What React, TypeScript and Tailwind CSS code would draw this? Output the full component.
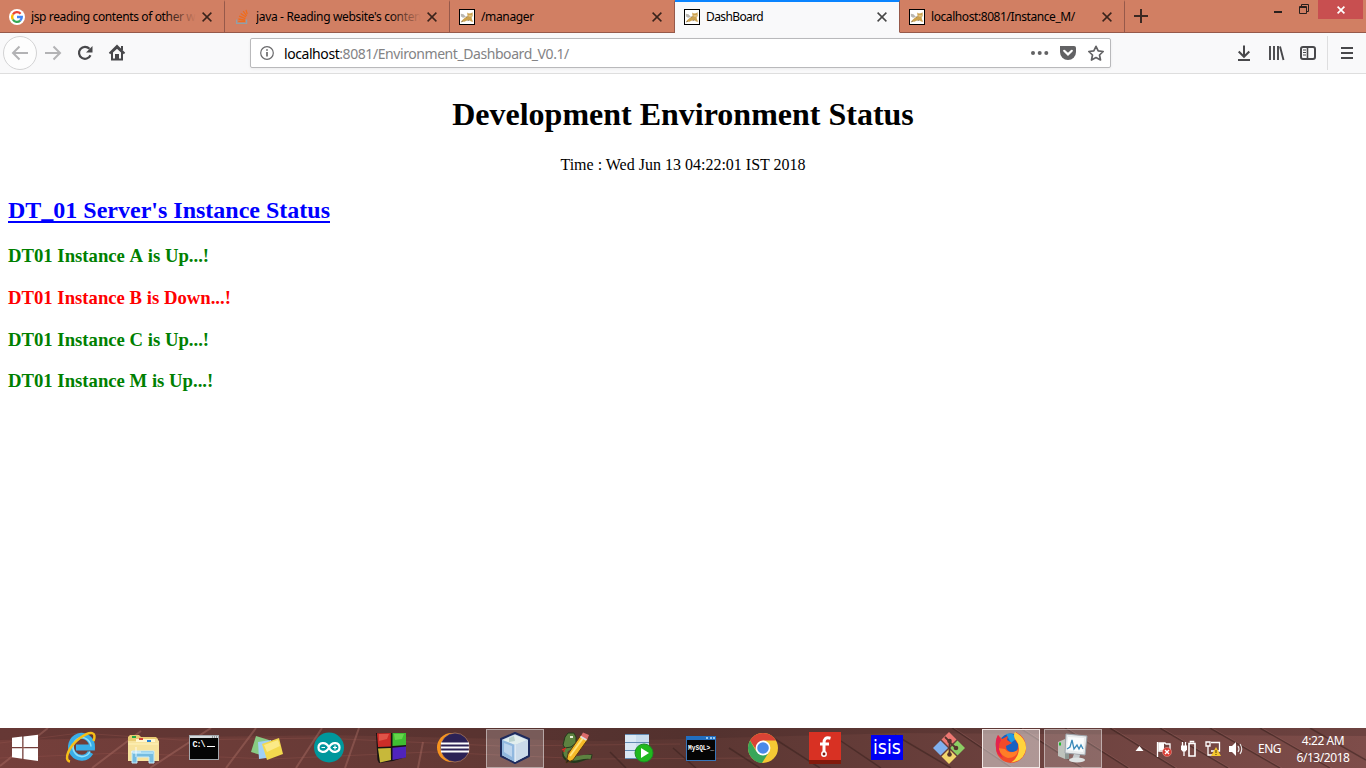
import type { ReactNode } from 'react';

const ui = "font-['Noto_Sans','Open_Sans',sans-serif]";

function GoogleIcon() {
  return (
    <svg viewBox="0 0 16 16" className="h-4 w-4 shrink-0">
      <circle cx="8" cy="8" r="8" fill="#fff" />
      <g fill="none" strokeWidth="2.3">
        <path d="M3.9 5.5A4.8 4.8 0 0 1 11.6 4.8" stroke="#ea4335" />
        <path d="M3.9 5.5A4.8 4.8 0 0 0 3.9 10.5" stroke="#fbbc05" />
        <path d="M3.9 10.5A4.8 4.8 0 0 0 11.2 11.6" stroke="#34a853" />
        <path d="M11.2 11.6A4.8 4.8 0 0 0 12.8 8H8" stroke="#4285f4" />
      </g>
    </svg>
  );
}

function StackIcon() {
  return (
    <svg viewBox="0 0 16 16" className="h-4 w-4 shrink-0" fill="none" strokeWidth="1.3">
      <path d="M2.6 10.5V14.4H12.6V10.5" stroke="#8fa0a8" />
      <path d="M4.3 12.4H11M4.4 10 11 11.1M5.1 7.2 11.4 9.6M6.7 4.5 12 8M9.2 2.2 12.6 6.8M12 .8 13.2 5.2" stroke="#ef6c1c" />
    </svg>
  );
}

function TomcatIcon() {
  return (
    <svg viewBox="0 0 16 16" className="h-4 w-4 shrink-0">
      <rect x=".5" y=".5" width="15" height="15" fill="#fff" stroke="#000" />
      <path d="M1.8 4.8 4.5 5.2 7 8 4 8.8 2 7.5Z" fill="#b9b7b2" />
      <path d="M2 12.6 4.2 10.2 6.2 8.4 8.6 7.4 8.2 3.4 9.8 4.4 12 4.3 13.6 3.2 13.7 7 12.6 8.6 13 10.6 14.3 12.8 12 12.6 10.4 11 8 11.4 5.4 12.8Z" fill="#cda250" />
      <path d="M9.4 6H12.8V7.8H9.8Z" fill="#e2c486" />
      <path d="M2 13 4 12.2M8.6 11.6 10.6 11.2M7 8.2 8.6 7.6" fill="none" stroke="#7d6844" strokeWidth=".7" />
    </svg>
  );
}

function TabClose() {
  return (
    <svg viewBox="0 0 10 10" className="h-[10px] w-[10px] shrink-0">
      <path d="M.6.6 9.4 9.4M9.4.6.6 9.4" stroke="#000" strokeOpacity=".72" strokeWidth="1.5" />
    </svg>
  );
}

type TabData = { label: string; icon: ReactNode; active?: boolean; fade?: boolean; spacing: string };

const tabs: TabData[] = [
  { label: 'jsp reading contents of other w', icon: <GoogleIcon />, fade: true, spacing: 'tracking-[-0.37px]' },
  { label: "java - Reading website's conten", icon: <StackIcon />, fade: true, spacing: 'tracking-[-0.34px]' },
  { label: '/manager', icon: <TomcatIcon />, spacing: 'tracking-[-0.35px]' },
  { label: 'DashBoard', icon: <TomcatIcon />, active: true, spacing: 'tracking-[-0.6px]' },
  { label: 'localhost:8081/Instance_M/', icon: <TomcatIcon />, spacing: 'tracking-[-0.42px]' },
];

function Tab({ tab }: { tab: TabData }) {
  return (
    <div
      className={
        tab.active
          ? 'flex h-[33px] w-[225px] items-center border-t-2 border-r border-b border-t-[#0a84ff] border-r-[#96594a] border-b-[#f9f9fa] bg-[#f9f9fa] pr-[11px] pl-[9px]'
          : 'flex h-[33px] w-[225px] items-center border-t-2 border-r border-b border-t-transparent border-r-[#96594a] border-b-[#96594a] pr-[11px] pl-[9px]'
      }
    >
      {tab.icon}
      <div className="relative ml-1.5 w-[165px] overflow-hidden">
        <span className={`block text-[12px] leading-5 whitespace-nowrap text-black ${tab.spacing}`}>{tab.label}</span>
        {tab.fade && <span className="absolute inset-y-0 right-0 w-8 bg-linear-to-r from-[#d17f63]/0 to-[#d17f63]" />}
      </div>
      <span className="ml-auto pr-px">
        <TabClose />
      </span>
    </div>
  );
}

function TabStrip() {
  return (
    <header className="flex h-[33px] shrink-0 bg-[#d17f63]">
      {tabs.map((t) => (
        <Tab key={t.label} tab={t} />
      ))}
      <div className="flex flex-1 items-start border-b border-[#96594a]">
        <svg viewBox="0 0 14 14" className="mt-[9px] ml-[9px] h-[14px] w-[14px]">
          <path d="M7 0V14M0 7H14" stroke="#3a2923" strokeWidth="2" />
        </svg>
        <svg viewBox="0 0 48 20" className="ml-auto h-5 w-12" fill="none" stroke="#29201d">
          <path d="M9 12H17" strokeWidth="2" />
          <path d="M34.5 6.5H41.5V13.5H34.5ZM34.5 7.5H41.5M36.5 6V4.5H43.5V11.5H42" strokeWidth="1" />
        </svg>
        <div className="ml-[5px] mr-[3px] flex h-[19px] w-[45px] items-center justify-center bg-[#c84f50]">
          <svg viewBox="0 0 8 8" className="h-2 w-2">
            <path d="M.6.6 7.4 7.4M7.4.6.6 7.4" stroke="#fff" strokeWidth="1.7" />
          </svg>
        </div>
      </div>
    </header>
  );
}

function Toolbar() {
  return (
    <nav className="flex h-[41px] shrink-0 items-center border-b border-[#dedede] bg-[#f9f9fa]">
      <svg viewBox="0 0 130 40" className="h-10 w-[130px]" fill="none">
        <circle cx="20" cy="20" r="16.5" fill="#fdfdfd" stroke="#d3d3d4" />
        <path d="M28 20H13M19.5 13.5 13 20 19.5 26.5" stroke="#b3b3b5" strokeWidth="2" />
        <path d="M45 20H60M53.5 13.5 60 20 53.5 26.5" stroke="#b3b3b5" strokeWidth="2" />
        <path d="M90.5 22.3A6 6 0 1 1 89.5 15.8" stroke="#48484b" strokeWidth="2.2" />
        <path d="M92.5 13V19.5H86Z" fill="#48484b" />
        <path d="M109.5 20.5 117 13 124.5 20.5" stroke="#48484b" strokeWidth="2" />
        <path d="M112 19V26.5H122V19L117 14.5Z" stroke="#48484b" strokeWidth="2" />
        <path d="M115 21H119V27H115Z" fill="#48484b" />
        <path d="M121 13H123V17H121Z" fill="#48484b" />
      </svg>
      <div className="ml-[120px] flex h-[30px] w-[861px] items-center rounded-[2px] border border-[#b9b9bb] bg-white shadow-[0_1px_3px_rgba(0,0,0,0.06)]">
        <svg viewBox="0 0 14 14" className="ml-[9px] h-[14px] w-[14px]" fill="none" stroke="#6a6a6c">
          <circle cx="7" cy="7" r="6.3" strokeWidth="1.2" />
          <path d="M7 6V10.5M7 3.2V4.8" strokeWidth="1.7" />
        </svg>
        <span className="ml-[10px] pt-[2px] text-[14px] leading-5 tracking-[-0.43px] whitespace-nowrap text-[#838385]">
          <span className="text-black">localhost</span>:8081/Environment_Dashboard_V0.1/
        </span>
        <svg viewBox="0 0 80 20" className="mr-[2px] ml-auto h-5 w-20" fill="none">
          <g fill="#626264">
            <circle cx="5" cy="10" r="2" />
            <circle cx="11.7" cy="10" r="2" />
            <circle cx="18.3" cy="10" r="2" />
            <path d="M33 3H47Q49 3 49 5V9A8 8 0 0 1 33 9V5Q33 3 33 3Z" transform="translate(-1 0)" />
          </g>
          <path d="M36.2 7.8 40 11.4 43.8 7.8" stroke="#fff" strokeWidth="2.2" strokeLinecap="round" />
          <path d="M68 3.3 70.2 7.9 75.2 8.5 71.5 12 72.5 17 68 14.5 63.5 17 64.5 12 60.8 8.5 65.8 7.9Z" stroke="#626264" strokeWidth="1.7" strokeLinejoin="round" />
        </svg>
      </div>
      <svg viewBox="0 0 136 40" className="ml-auto h-10 w-[136px]" fill="none" stroke="#48484b">
        <path d="M14 12.5V24M8.7 18.5 14 23.8 19.3 18.5M8 27H20" strokeWidth="2" />
        <path d="M40 13V27M44 13V27M48 13V27M50 13.5 53.5 27" strokeWidth="1.9" />
        <rect x="71" y="14" width="14" height="12" rx="2" strokeWidth="2" />
        <path d="M77.5 14V26" strokeWidth="1.6" />
        <path d="M73 17H76M73 19.5H76M73 22H76" strokeWidth="1" />
        <path d="M97.5 3V37" stroke="#dededf" />
        <path d="M111 15H123M111 20H123M111 25H123" strokeWidth="2" />
      </svg>
    </nav>
  );
}

const instances = [
  { text: 'DT01 Instance A is Up...!', up: true },
  { text: 'DT01 Instance B is Down...!', up: false },
  { text: 'DT01 Instance C is Up...!', up: true },
  { text: 'DT01 Instance M is Up...!', up: true },
];

function Page() {
  return (
    <main className="flex-1 bg-white px-2 pt-[22px] font-['Liberation_Serif','Times_New_Roman',serif] text-black">
      <h1 className="text-center text-[32px] leading-9 font-bold">Development Environment Status</h1>
      <p className="mt-6 text-center text-[16px] leading-[18px]">Time : Wed Jun 13 04:22:01 IST 2018</p>
      <h2 className="mt-[23px] text-[24px] leading-[27px] font-bold text-[#0000ff]">
        <span className="underline decoration-2 underline-offset-[3px] [text-decoration-skip-ink:none]">DT_01 Server's Instance Status</span>
      </h2>
      <div className="mt-[21.2px] flex flex-col gap-[19.7px]">
        {instances.map((i) => (
          <h3 key={i.text} className={`text-[18.72px] leading-[22px] font-bold [font-kerning:none] ${i.up ? 'text-[#008000]' : 'text-[#ff0000]'}`}>
            {i.text}
          </h3>
        ))}
      </div>
    </main>
  );
}

const appIcons: { name: string; frame?: 'open' | 'active'; art: ReactNode }[] = [
  {
    name: 'ie',
    art: (
      <>
        <path d="M25.5 20.5A10.5 11 0 1 1 27 15.5H11" fill="none" stroke="#39aee8" strokeWidth="6" />
        <path d="M25 19.5A9 9.5 0 1 1 26 14.5" fill="none" stroke="#8fe0fc" strokeWidth="1.5" />
        <path d="M5 29.5C-2 28 4 14 15 6S32 0 28.5 9" fill="none" stroke="#f6bf18" strokeWidth="2.5" />
      </>
    ),
  },
  {
    name: 'explorer',
    art: (
      <>
        <path d="M1 5 3 3H12L14 5H29L31 7V28H1Z" fill="#e9cb72" />
        <path d="M1 9H13L15 7H30L32 9V29H1Z" fill="#f7e39d" />
        <path d="M9 7H28V10H9Z" fill="#fff7cf" />
        <path d="M5 4H9V6H5Z" fill="#25a844" />
        <path d="M12 6H16V8H12Z" fill="#d54337" />
        <path d="M20 8H24V10H20Z" fill="#2a84d5" />
        <path d="M1 12H31" stroke="#fff4bd" />
        <path d="M5 31V19H27V31H22V25H10V31Z" fill="#75bce0" stroke="#c8ecfb" />
        <path d="M6 21H26" stroke="#a9def5" strokeWidth="2" />
        <path d="M9 15V25M4 20H14" stroke="#fff" strokeWidth=".8" />
      </>
    ),
  },
  {
    name: 'cmd',
    art: (
      <>
        <rect x=".5" y="3.5" width="29" height="24" fill="#050505" stroke="#a4a9ae" />
        <path d="M1 5H29" stroke="#d6dbde" strokeWidth="2" />
        <path d="M23 5H24M25 5H26M27 5H28" stroke="#555" />
        <text x="3.5" y="15" fill="#fff" fontSize="8.5" fontFamily="Liberation Mono" fontWeight="bold" textLength="13">C:\</text>
        <path d="M18 14.5H26" stroke="#fff" />
      </>
    ),
  },
  {
    name: 'notes',
    art: (
      <>
        <path d="M5 4 18 8 13 24 0 20Z" fill="#88ca83" />
        <path d="M7 10 20 8 22 25 8 27Z" fill="#a0d0f6" />
        <path d="M11 12 28 6 32 22 16 28Z" fill="#f3d94e" />
        <path d="M13 13 27 8 29 14 16 20Z" fill="#fbea87" />
      </>
    ),
  },
  {
    name: 'arduino',
    art: (
      <>
        <circle cx="16" cy="15.5" r="15" fill="#00979c" />
        <path d="M16 15.5C12.5 8.5 5.5 11 5.5 15.5S12.5 22.5 16 15.5 26.5 11 26.5 15.5 19.5 22.5 16 15.5Z" fill="none" stroke="#fff" strokeWidth="2.2" />
        <path d="M8.5 15.5H12M20 15.5H24M22 13.5V17.5" stroke="#fff" strokeWidth="1.2" />
      </>
    ),
  },
  {
    name: 'blocks',
    art: (
      <>
        <path d="M1 1H31V25L18 29 4 31 2.5 28Z" fill="#171313" />
        <path d="M2 1.2 15.8 1V14.4L3 15Z" fill="#cc2d28" />
        <path d="M17.5 1H31V13L17.5 14Z" fill="#3fbe32" />
        <path d="M3 16.5 15.8 16 16 28 5 30.5Z" fill="#c7b83a" />
        <path d="M17.5 15.8 31 14.4V25.4L17.5 28Z" fill="#5024bc" />
        <path d="M4 2 14 2 12 7 4 9Z" fill="#f07562" opacity=".55" />
        <path d="M19 2H29L27 7 20 8Z" fill="#8deb63" opacity=".5" />
      </>
    ),
  },
  {
    name: 'eclipse',
    art: (
      <>
        <circle cx="14.5" cy="15.5" r="14.5" fill="#f7941e" />
        <circle cx="18" cy="15.5" r="14.5" fill="#2c2255" stroke="#e2a067" strokeWidth=".5" />
        <path d="M4 11.5H32M4 15.5H32M4 19.5H32" stroke="#fff" strokeWidth="2" />
      </>
    ),
  },
  {
    name: 'netbeans',
    frame: 'open',
    art: (
      <>
        <path d="M16 1 30 7V24L16 31 2 24V7Z" fill="#c1d6e9" stroke="#1e2b5d" strokeWidth="2" strokeLinejoin="round" />
        <path d="M4 8 16 3 28 8 16 13Z" fill="#e2eeee" />
        <path d="M10 6 15 4 16 9 10 10Z" fill="#abc6c1" opacity=".7" />
        <path d="M3 8 16 13V30L3 23Z" fill="#91b8df" />
        <path d="M5 11 13 14V25L5 20Z" fill="#d0e1f3" opacity=".7" />
        <path d="M16 13 29 8V23L16 30Z" fill="#cbdbea" />
        <path d="M16 13V30" stroke="#f4f8fb" />
      </>
    ),
  },
  {
    name: 'python',
    art: (
      <>
        <path d="M6 15Q1 24 7 27T20 27 31 25" fill="none" stroke="#24391c" strokeWidth="5" />
        <path d="M12 9Q15 14 9 16T5 23Q8 28 17 26T30 25" fill="none" stroke="#5d8240" strokeWidth="4" />
        <path d="M2 13 4 5 7 1H13L15 5 15 11 10 15 4 16Z" fill="#5d8240" stroke="#24391c" />
        <path d="M5 16 1 18M3 17V20" stroke="#e12924" strokeWidth="1.3" />
        <path d="M9 4H12V6H9Z" fill="#e9f0d8" />
        <path d="M5 31 7 22 20 3 27 7 12 28Z" fill="#f6ba28" stroke="#5a3a12" />
        <path d="M9 24 22 6" stroke="#ffe37b" strokeWidth="2" />
        <path d="M20 4 22 .5 28 3 26 8Z" fill="#d96b6a" />
        <path d="M19.5 4.5 25.5 8" stroke="#dedede" strokeWidth="2" />
        <path d="M5 31 6 27 9 29Z" fill="#29231b" />
      </>
    ),
  },
  {
    name: 'database',
    art: (
      <>
        <path d="M2 2H26V27H2Z" fill="#c9dced" />
        <path d="M2 3H13V26H2Z" fill="#e7f0f8" opacity=".6" />
        <path d="M2 2.5H26M2 10.5H26M2 18.5H26M2 26.5H26" stroke="#638bb3" />
        <circle cx="21" cy="21" r="9" fill="#20b91e" stroke="#1b8f23" />
        <path d="M18 16V26L26 21Z" fill="#fff" />
      </>
    ),
  },
  {
    name: 'mysql',
    art: (
      <>
        <rect x="1.5" y="4.5" width="29" height="24" fill="#050505" stroke="#3776b9" />
        <path d="M1 6H31" stroke="#226ec0" strokeWidth="4" />
        <path d="M21 6H23M25 6H27M28 6H30" stroke="#97c9ef" strokeWidth="2" />
        <text x="3" y="17.5" fill="#fff" fontSize="8" fontFamily="Liberation Mono" fontWeight="bold" textLength="26" lengthAdjust="spacingAndGlyphs">MySQL&gt;_</text>
      </>
    ),
  },
  {
    name: 'chrome',
    art: (
      <>
        <circle cx="16" cy="16" r="15" fill="#f5c934" />
        <path d="M3 8.5A15 15 0 0 1 29 8.5H16L10 19Z" fill="#d94335" />
        <path d="M3 8.5A15 15 0 0 0 15 31L22 20 16 23 9 19Z" fill="#38a65a" />
        <circle cx="16" cy="16" r="7.4" fill="#fff" />
        <circle cx="16" cy="16" r="5.8" fill="#4a89e8" />
      </>
    ),
  },
  {
    name: 'fritzing',
    art: (
      <>
        <path d="M0 0H32V28H0Z" fill="#d83123" />
        <path d="M0 28H32V32H0Z" fill="#821a0c" />
        <path d="M21.5 6.2C16.5 4.8 15 7 15 11V20M11 12H20" fill="none" stroke="#fff" strokeWidth="3" />
        <circle cx="15" cy="22" r="2.2" fill="#821a0c" stroke="#fff" strokeWidth="1.5" />
      </>
    ),
  },
  {
    name: 'isis',
    art: (
      <>
        <path d="M0 3H32V28H0Z" fill="#0000f5" />
        <text x="2" y="22" fill="#fff" fontSize="20" fontFamily="DejaVu Sans" textLength="28" lengthAdjust="spacingAndGlyphs">isis</text>
      </>
    ),
  },
  {
    name: 'git',
    art: (
      <>
        <path d="M16 0 23.5 7.5 16 15 8.5 7.5Z" fill="#ed7772" />
        <path d="M7.5 8.5 15 16 7.5 23.5 0 16Z" fill="#80b0ee" />
        <path d="M24.5 8.5 32 16 24.5 23.5 17 16Z" fill="#8cce64" />
        <path d="M16 17 23.5 24.5 16 32 8.5 24.5Z" fill="#f1d76c" />
        <path d="M12 5 16.5 9.5V23M16.5 10 22.5 15.5" fill="none" stroke="#54342d" strokeWidth="1.8" />
        <circle cx="16.5" cy="9" r="2.3" fill="#54342d" />
        <circle cx="23" cy="16" r="2.3" fill="#54342d" />
        <circle cx="16.5" cy="22.5" r="2.3" fill="#54342d" />
      </>
    ),
  },
  {
    name: 'firefox',
    frame: 'active',
    art: (
      <>
        <circle cx="16" cy="14" r="12.5" fill="#1760c3" />
        <path d="M11 2Q18 0 22 6L16 11Z" fill="#219be1" />
        <path d="M3 3 7 7 13 4 12 8 17 11 11 14Q11 20 18 20 24 20 23 12 17 5 21 0 31 5 31 16A15 15 0 0 1 1 16Q0 9 3 3Z" fill="#f24a29" />
        <path d="M20 0Q32 7 31 17 29 29 16 30.5 22 27 23.5 20 25 12 20 7 18 3 20 0Z" fill="#ffd43d" />
        <path d="M10 17Q14 23 23 18 22 26 13 26 6 24 3 16Z" fill="#ff7d27" />
        <path d="M3 3 6 8Q1 16 8 26 1 23 1 15 0 8 3 3Z" fill="#e4234d" />
      </>
    ),
  },
  {
    name: 'monitor',
    frame: 'open',
    art: (
      <>
        <path d="M1 10 8 7V27L1 24Z" fill="#bec3bd" />
        <path d="M8 7 12 9V27H8Z" fill="#8d9793" />
        <path d="M2 12H4" stroke="#20ba29" strokeWidth="3" />
        <path d="M9 2 30 4 28 23 8 21Z" fill="#e8ebed" stroke="#9da5ac" />
        <path d="M11 5 27 6 26 20 10 18Z" fill="#fafcfd" />
        <path d="M10 17 13 15 15 8 17 17 20 13 22 17 24 13 26 17" fill="none" stroke="#3b8bba" strokeWidth="1.3" />
        <path d="M17 22 23 23 22 27H15Z" fill="#c6cbce" />
        <ellipse cx="20" cy="28" rx="8" ry="2.5" fill="#dfe3e4" />
      </>
    ),
  },
];

function Taskbar() {
  return (
    <footer className="relative h-10 shrink-0 overflow-hidden bg-linear-to-r from-[#753f3b] via-[#5b3632] to-[#7e4d4a]">
      <svg viewBox="0 0 1366 40" className="absolute inset-0 h-10 w-[1366px]" fill="none">
        <path d="M0 0H1366V8L900 5 600 13 330 7 0 12Z" fill="#3c2523" opacity=".25" />
        <path d="M0 38 48 0M92 40 141 3M150 40 211 0M226 40 256 0M296 40 322 0M345 40 359 0M418 40 423 14" stroke="#b27468" strokeWidth="2" opacity=".4" />
        <path d="M0 15 80 5 180 12 320 10 500 18 680 16M0 30 120 25 270 31 430 24 590 31 760 30" stroke="#a76159" opacity=".25" />
        <path d="M610 24 626 40M673 20 696 40M729 20 760 40M775 11 820 40M835 9 881 40M895 7 951 40M952 0 1012 40M1020 0 1082 40M1065 0 1128 40M1110 0 1175 40M1160 0 1228 40M1210 0 1280 40M1260 0 1330 40M1310 0 1366 32" stroke="#38201e" strokeWidth="1.5" opacity=".55" />
        <path d="M954 0 1014 40M1022 0 1084 40M1067 0 1130 40M1112 0 1177 40M1162 0 1230 40M1212 0 1282 40M1262 0 1332 40" stroke="#aa716b" opacity=".28" />
      </svg>
      <div className="relative flex h-10 items-center">
        <svg viewBox="0 0 50 40" className="h-10 w-[50px]">
          <path d="M12 9.8 22.2 8.6V19H12ZM23.5 8.4 38 6.7V19H23.5ZM12 20.3H22.2V30.7L12 29.2ZM23.5 20.3H38V33L23.5 30.9Z" fill="#fff" />
        </svg>
        {appIcons.map((app) => (
          <div key={app.name} className="flex h-10 w-[62px] items-center justify-center">
            <div
              className={
                app.frame === 'active'
                  ? 'flex h-[39px] w-[58px] items-center justify-center border border-[#f1e6e4] bg-white/45'
                  : app.frame === 'open'
                    ? 'flex h-[39px] w-[58px] items-center justify-center border border-white/45 bg-white/20'
                    : 'flex h-10 w-[58px] items-center justify-center'
              }
            >
              <svg viewBox="0 0 32 32" className="h-8 w-8 overflow-visible">
                {app.art}
              </svg>
            </div>
          </div>
        ))}
        <svg viewBox="0 0 150 40" className="h-10 w-[150px]" fill="none">
          <path d="M31.5 23 35.5 18 39.5 23Z" fill="#fff" />
          <path d="M53.5 14V29M55 15H61L62 16H66V23H55Z" stroke="#fff" strokeWidth="1.3" />
          <path d="M55 15H60V22H55Z" fill="#fff" />
          <circle cx="63" cy="24" r="4.5" fill="#d83a32" stroke="#efaaa3" strokeWidth=".5" />
          <path d="M61 22 65 26M65 22 61 26" stroke="#fff" strokeWidth="1.4" />
          <path d="M85 15.5H91V28H85ZM86.5 14.5V13.5H89.5V14.5" stroke="#fff" strokeWidth="1.6" />
          <path d="M78.5 14V18M81.5 14V18M80 23V28" stroke="#fff" strokeWidth="1.3" />
          <path d="M77 17.5H83V21.5L81.5 23.5H78.5L77 21.5Z" fill="#fff" />
          <path d="M107 14.5H115.5V23H107M102 14H106V18H102ZM104 18V27H108" stroke="#fff" strokeWidth="1.3" />
          <path d="M112 19 117 28H107Z" fill="#f6c82e" />
          <path d="M112 22V25M112 26V27" stroke="#4e350b" />
          <path d="M125 18H128L132 14V28L128 24H125Z" fill="#fff" />
          <path d="M134 18Q136 21 134 24M136 16Q139.5 21 136 26" stroke="#eee" strokeWidth="1.1" />
        </svg>
        <span className="ml-[4px] w-7 pt-px text-[12px] leading-5 tracking-[-0.5px] text-white">ENG</span>
        <div className="ml-[4px] w-[66px] pt-[2px] text-center text-[12px] leading-[17px] tracking-[-0.45px] whitespace-nowrap text-white">
          <div>4:22 AM</div>
          <div>6/13/2018</div>
        </div>
      </div>
    </footer>
  );
}

export default function App() {
  return (
    <div className={`flex h-[768px] w-[1366px] flex-col overflow-hidden ${ui}`}>
      <TabStrip />
      <Toolbar />
      <Page />
      <Taskbar />
    </div>
  );
}
